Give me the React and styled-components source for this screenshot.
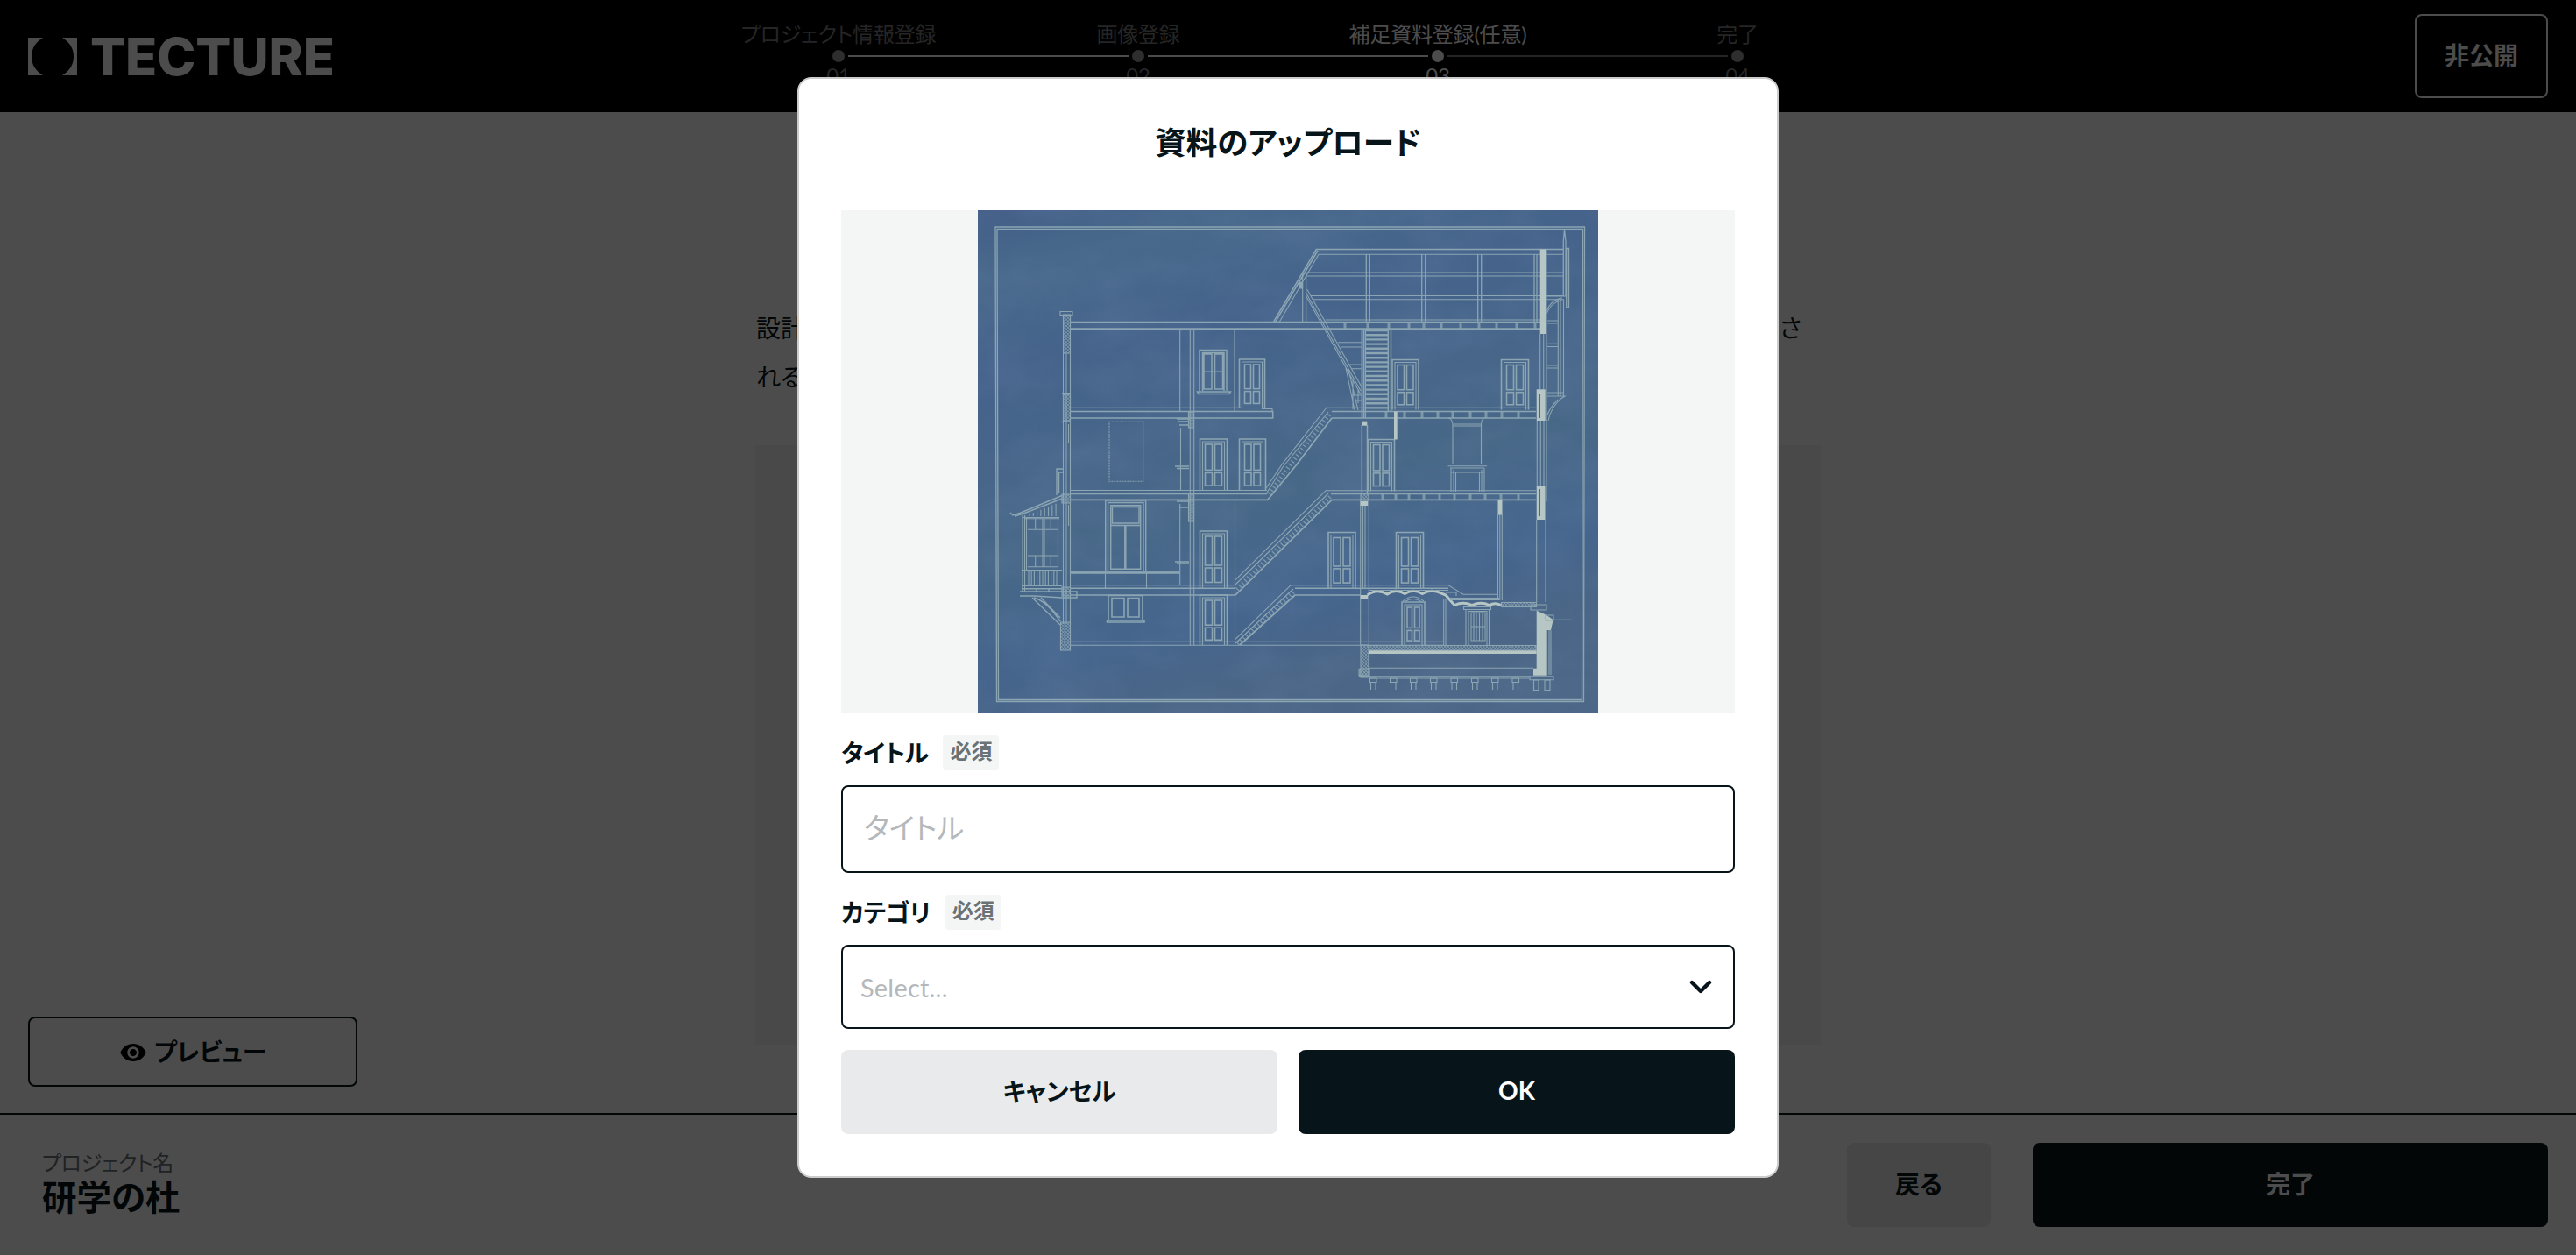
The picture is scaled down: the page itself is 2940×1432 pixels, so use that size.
import React from "react"
import styled, { createGlobalStyle } from "styled-components"
import { MdVisibility } from "react-icons/md"

const ink = "#07151a"

const GlobalStyle = createGlobalStyle`
  * {
    box-sizing: border-box;
  }
  body {
    margin: 0;
    background: #fff;
    color: ${ink};
    font-family: Lato, "Noto Sans CJK JP", sans-serif;
    font-size: 28px;
    font-feature-settings: "palt";
    overflow: hidden;
  }
  button, input {
    font: inherit;
    font-feature-settings: inherit;
  }
`

const Page = styled.div`
  display: flex;
  flex-direction: column;
  height: 1432px;
`

const Header = styled.header`
  display: grid;
  grid-template-columns: 1fr 1368px 1fr;
  align-items: center;
  height: 128px;
  padding: 0 32px;
  background: #000;
  color: #fff;
`

const LogoSvg = styled.svg`
  display: block;
  width: 372px;
  height: 88px;
  fill: #fff;
`

const Steps = styled.ol`
  display: grid;
  grid-template-columns: repeat(4, 342px);
  align-self: start;
  margin: 0;
  padding: 24px 0 0;
  list-style: none;
`

const Step = styled.li`
  display: flex;
  flex-direction: column;
  align-items: center;
  font-size: 24px;
  line-height: 30px;
  letter-spacing: -0.2px;
  white-space: nowrap;
  color: ${p => (p.$active ? "#fff" : "#7c7c7c")};
`

const StepTrack = styled.div`
  display: grid;
  grid-template-columns: 1fr 14px 1fr;
  align-items: center;
  column-gap: 4px;
  width: 100%;
  height: 14px;
  margin-top: 3px;
`

const StepLine = styled.span`
  height: 2px;
  background: ${p => (p.$hidden ? "transparent" : p.$done ? "#fff" : "#7c7c7c")};
`

const StepDot = styled.span`
  height: 14px;
  border-radius: 50%;
  background: ${p => (p.$active ? "#fff" : "#999")};
`

const StatusButton = styled.button`
  justify-self: end;
  width: 152px;
  height: 96px;
  padding: 0 0 4px;
  border: 2px solid #fff;
  border-radius: 8px;
  background: none;
  color: #fff;
  font-weight: 700;
`

const Main = styled.main`
  flex: 1;
  width: 1216px;
  margin: 0 auto;
  padding-top: 218px;
`

const Lead = styled.p`
  display: flex;
  justify-content: space-between;
  margin: 0;
  padding: 0 22px 0 1px;
  line-height: 56px;
`

const DropArea = styled.div`
  height: 684px;
  margin-top: 50px;
  background: #f4f6f5;
`

const PreviewRow = styled.div`
  height: 0;
  padding-left: 32px;
`

const PreviewButton = styled.button`
  display: flex;
  justify-content: center;
  align-items: center;
  gap: 8px;
  width: 376px;
  height: 80px;
  margin-top: -110px;
  padding: 0 0 2px;
  border: 2px solid ${ink};
  border-radius: 8px;
  background: none;
  color: ${ink};
  font-weight: 700;
  svg {
    width: 32px;
    height: 32px;
    margin-top: 4px;
    fill: #000;
  }
`

const Footer = styled.footer`
  display: flex;
  align-items: center;
  height: 162px;
  padding: 0 32px 0 48px;
  border-top: 2px solid ${ink};
`

const ProjectInfo = styled.div`
  flex: 1;
`

const ProjectLabel = styled.div`
  font-size: 24px;
  line-height: 28px;
  letter-spacing: -0.4px;
  color: #6b7276;
`

const ProjectName = styled.div`
  font-size: 39.5px;
  font-weight: 700;
  line-height: 50px;
`

const Button = styled.button`
  width: ${p => p.$width}px;
  height: 96px;
  margin-left: ${p => p.$gap || 0}px;
  padding: 0 0 4px;
  border: 0;
  border-radius: 8px;
  background: ${p => (p.$primary ? ink : "#e9eaec")};
  color: ${p => (p.$primary ? "#fff" : ink)};
  font-weight: 700;
`

const Overlay = styled.div`
  position: fixed;
  inset: 0;
  display: flex;
  align-items: center;
  justify-content: center;
  background: rgba(0, 0, 0, 0.7);
`

const Modal = styled.section`
  width: 1120px;
  height: 1256px;
  padding: 0 48px;
  border: 2px solid #ccc;
  border-radius: 16px;
  background: #fff;
`

const ModalTitle = styled.h2`
  margin: 0;
  height: 150px;
  font-size: 35.5px;
  line-height: 145px;
  text-align: center;
`

const PreviewFrame = styled.div`
  display: flex;
  justify-content: center;
  height: 574px;
  background: #f4f6f5;
`

const FieldHead = styled.div`
  display: flex;
  align-items: center;
  gap: 17px;
  height: 82px;
  padding-top: 8px;
  font-weight: 700;
  line-height: 40px;
  letter-spacing: -0.5px;
`

const Required = styled.span`
  width: 64px;
  height: 40px;
  border-radius: 4px;
  background: #f4f6f5;
  color: #6b7276;
  font-size: 24px;
  line-height: 36px;
  letter-spacing: 0;
  text-align: center;
`

const TextInput = styled.input`
  display: block;
  width: 100%;
  height: 100px;
  padding: 0 24px 4px;
  border: 2px solid ${ink};
  border-radius: 8px;
  background: #fff;
  font-size: 33px;
  outline: none;
  &::placeholder {
    color: #b5b8ba;
    opacity: 1;
  }
`

const SelectBox = styled.div`
  display: flex;
  align-items: center;
  justify-content: space-between;
  height: 96px;
  margin-bottom: 24px;
  padding: 0 24px 0 20px;
  border: 2px solid ${ink};
  border-radius: 8px;
  color: #b5b8ba;
  font-size: 29px;
  letter-spacing: 0.2px;
`

const Chevron = styled.svg`
  width: 26px;
  height: 16px;
  fill: none;
  stroke: ${ink};
  stroke-width: 4.4;
  stroke-linecap: round;
  stroke-linejoin: round;
`

const Actions = styled.div`
  display: flex;
`

const steps = [
  { label: "プロジェクト情報登録", no: "01" },
  { label: "画像登録", no: "02" },
  { label: "補足資料登録(任意)", no: "03" },
  { label: "完了", no: "04" },
]
const current = 2

const Logo = () => (
  <LogoSvg viewBox="0 -20 372 88">
    <path d="M0 3H17Q4 11 4 24.500Q4 38 17 46H0Z" />
    <path d="M56 3H39Q52 11 52 24.500Q52 38 39 46H56Z" />
    <text
      x="71"
      y="46"
      fontFamily="Inter"
      fontWeight="800"
      fontSize="59"
      textLength="279"
      lengthAdjust="spacingAndGlyphs"
    >
      TECTURE
    </text>
  </LogoSvg>
)

const Sheet = styled.svg`
  display: block;
  width: 708px;
  height: 574px;
  fill: none;
  stroke: #8ba5b2;
  stroke-width: 1.1;
`

const doors = [
  [1414.5, 410, 29, 56],
  [1369.5, 501, 31, 59],
  [1414.5, 501, 30, 59],
  [1561.5, 501.5, 30, 59],
  [1589, 410.5, 30, 57],
  [1713.5, 410.5, 31, 57],
  [1369.5, 606, 31, 65],
  [1369.5, 679, 31, 57],
  [1516, 607.5, 31, 64],
  [1593.5, 607.5, 31, 64],
  [1600, 687, 26, 49],
]

const Door = ({ x, y, w, h }) => {
  const pw = (w - 15) / 2
  const top = (h - 10) * 0.6
  const low = (h - 10) * 0.3
  return (
    <g>
      <path d={`M${x} ${y + h}V${y}H${x + w}V${y + h}`} strokeWidth="1.6" />
      <path d={`M${x + 3} ${y + h}V${y + 3}H${x + w - 3}V${y + h}`} />
      <rect x={x + 6} y={y + 6} width={pw} height={top} strokeWidth="1.6" />
      <rect x={x + w - 6 - pw} y={y + 6} width={pw} height={top} strokeWidth="1.6" />
      <rect x={x + 6} y={y + top + 9} width={pw} height={low} strokeWidth="1.6" />
      <rect x={x + w - 6 - pw} y={y + top + 9} width={pw} height={low} strokeWidth="1.6" />
    </g>
  )
}

const range = (from, to, step) => {
  const out = []
  for (let n = from; n <= to; n += step) out.push(n)
  return out
}

const Ticks = ({ xs, y, h }) => (
  <path d={xs.map(x => `M${x} ${y}v${h}`).join("")} strokeWidth="3" opacity="0.8" />
)

const Blueprint = () => (
  <Sheet viewBox="1116 240 708 574">
    <defs>
      <linearGradient id="paper" x1="0" y1="0" x2="0.3" y2="1">
        <stop offset="0" stopColor="#425d87" />
        <stop offset="0.12" stopColor="#48698b" />
        <stop offset="0.3" stopColor="#45638b" />
        <stop offset="0.65" stopColor="#486888" />
        <stop offset="0.85" stopColor="#45658d" />
        <stop offset="1" stopColor="#4b6686" />
      </linearGradient>
      <pattern id="hatch" width="2.600" height="2.600" patternUnits="userSpaceOnUse" patternTransform="rotate(45)">
        <path d="M0 0H2.600M0 0V2.600" stroke="#8ba5b2" strokeWidth="1.100" />
      </pattern>
      <filter id="grain" x="0" y="0" width="1" height="1">
        <feTurbulence type="fractalNoise" baseFrequency="0.012 0.02" numOctaves="4" seed="4" />
        <feColorMatrix values="0 0 0 0 0.22  0 0 0 0 0.3  0 0 0 0 0.5  0.9 0 0 0 -0.3" />
      </filter>
    </defs>
    <rect x="1116" y="240" width="708" height="574" fill="url(#paper)" stroke="none" />
    <rect x="1116" y="240" width="708" height="574" filter="url(#grain)" opacity="0.3" stroke="none" />

    {/* sheet border */}
    <path d="M1136 259H1808.500L1807.500 800.500H1137.500ZM1138 261.500H1806.500L1805.500 798.500H1139.500Z" strokeWidth="1.300" />

    {/* left wall */}
    <g fill="url(#hatch)">
      <rect x="1213.5" y="359" width="8" height="44" />
      <rect x="1213.5" y="450" width="8" height="30" />
      <rect x="1212" y="564" width="9.5" height="10" />
      <rect x="1212" y="670" width="9.5" height="10" />
      <rect x="1210.5" y="710" width="11" height="32" />
      <rect x="1553" y="736" width="9.500" height="37" />
      <rect x="1562" y="736.500" width="191" height="5.500" />
      <rect x="1713.500" y="687.500" width="40" height="5" />
      <rect x="1356.500" y="470" width="6" height="18" />
      <rect x="1356.500" y="563" width="6" height="32" />
      <rect x="1553" y="563" width="9" height="8" />
      <rect x="1552" y="763" width="11" height="8" />
    </g>
    <path d="M1210 355.500h14v4h-14zM1213.500 403V712M1217 403V712M1221.500 403V712M1212 448.500h10M1212 481h10M1219.500 484v22M1219.500 576v24" />

    {/* roof and floors */}
    <path d="M1221 367.700H1758M1221 375.200H1758" strokeWidth="1.700" />
    <path d="M1221 469.500H1452.700V477H1221M1520 469.500H1753M1520 477H1753" strokeWidth="1.600" />
    <path d="M1221 563.300H1446M1221 570.300H1447M1519 563.300H1753M1520 570.300H1753" strokeWidth="1.700" />
    <path d="M1221 671.300H1410M1221 679H1410M1478 671.300H1653M1478 679H1553" strokeWidth="1.500" />
    <path d="M1221 465.300H1418M1440 466.500H1452V469M1513 465.300H1753M1221 559.500H1446M1513 559.700H1753M1221 667.700H1410M1473 667.700H1653L1670 678.300H1709" />
    <path d="M1221 732.300H1647M1221 736.300H1647" />

    {/* inner walls */}
    <path d="M1346.700 375V469M1347.500 488V560M1346.700 575V667M1358.300 375V736M1360.500 375V736M1362.700 375V736M1409 375V469M1409.500 571V732" />
    <path d="M1343 478h15M1344 481h13M1346 485h11M1341 532h16M1343 534.500h14M1343 572h15M1346 579h11M1341 641h16M1343 643h14" strokeWidth="1.500" />
    <rect x="1266" y="481.300" width="38.700" height="68" strokeDasharray="2 1" />

    {doors.map(([x, y, w, h]) => (
      <Door key={`${x}-${y}`} x={x} y={y} w={w} h={h} />
    ))}

    {/* windows */}
    <path d="M1369 446V399.500H1400V446M1372.500 446V402.500H1397V446M1374 404H1383V444H1374ZM1386.500 404H1395.500V444H1386.500ZM1374 424.300H1395M1366.500 447H1404.500L1403 449.500H1368Z" strokeWidth="1.500" />
    <path d="M1261.700 652V571H1307.700V652M1264.500 652V573.500H1305V652M1267.700 576.700H1301.700V649.300H1267.700ZM1269.500 578.500H1300V597H1269.500ZM1267.700 599.500H1301.700" strokeWidth="1.400" />
    <path d="M1284.300 600V649M1221 653.500H1346.700" strokeWidth="2.500" />
    <path d="M1221 652H1346M1261.500 654V671M1308.500 654V671" />
    <path d="M1265 708V679.500H1304V708M1269 682.500H1283V704H1269ZM1287 682.500H1300V704H1287ZM1263.500 708H1306V710H1263.500Z" strokeWidth="1.600" />
    <path d="M1601 686Q1612.500 676 1625 686M1603 687Q1612.500 680 1623 687" />
    <path d="M1670.500 692.500h31v3h-31zM1673 695.500V736M1676 697.500H1697V736M1699.500 695.500V736M1676 697.500V736M1679 699H1695V731H1679ZM1679 715H1695" />
    <path d="M1682 699V731M1685 699V731M1688.500 699V731M1692 699V731" />

    {/* bay */}
    <path d="M1153 585L1156 588L1165 585L1212 565.500M1158 589L1168 586L1212 569M1206 565V535H1213M1207.500 539H1213M1208.500 539V563" strokeWidth="1.400" />
    <path d="M1167 586V675M1169.500 588V675M1171.500 591V650M1167 590.500H1209M1169 591.700H1209M1190 592V647M1192 592V647M1207.500 592V647M1173 604.300H1207M1173 634H1207M1173 646.700H1207M1181.700 592V604M1199.300 592V604M1181.700 634V647M1199.300 634V647M1166 650.500H1212M1166 668.500H1212" />
    <path d={range(1174, 1208, 3.2).map(x => `M${x} 652v15`).join("")} />
    <path d={range(1175, 1208, 4.3).map(x => `M${x} ${588 - (x - 1172) * 0.4}V589`).join("")} />
    <path d="M1166 671.700H1212M1164 675H1229V682H1212M1164 680H1180L1212 682M1178 682L1210 713M1188 682L1210 705M1180 682Q1195 686 1210 709M1183 671v4M1197 671v4" strokeWidth="1.400" />

    {/* stairs */}
    <g>
      <path d="M1513.300 466L1463 530L1445 557M1520 477L1480 530L1447 570M1516 470L1464 533L1446 562" />
      <path d="M1513.300 559.700L1410 661.700M1516 563L1410 667M1520 570.300L1410 679" />
      <path d="M1473.300 667.700L1410 729.300M1476 672L1410 734M1478 679L1415 736" />
      <g strokeWidth="5" strokeDasharray="1.300 3.200" opacity="0.8">
        <path d="M1517 473L1472 531L1447 566" />
        <path d="M1518 567L1411 673" />
        <path d="M1476 675.500L1412 735" />
      </g>
      <path d="M1520 477L1480 530L1447 570M1520 570.300L1410 679M1478 679L1415 736" strokeWidth="1.700" />
    </g>

    {/* attic */}
    <path d="M1453.300 367.700L1502.300 284.500H1785M1455.500 367.700L1504 286" strokeWidth="1.500" />
    <path d="M1460 367.700L1505 290.300H1785M1491.700 311H1785M1490 315H1785M1496 337.500H1785M1498 341.700H1785M1512.700 365H1758M1486.700 312V368M1490.700 312V368" />
    <path d="M1559.300 290V368M1563.300 290V368M1622.700 290V368M1626.700 290V368M1686.700 290V368M1690.700 290V368M1751 290V368M1754 290V368" strokeWidth="1.300" />
    <path d="M1491.700 330L1555 443.300M1490.700 338L1553 450M1490 333L1553 446M1536 420L1546 468M1539 422L1550 468M1544 432V467M1550 444V460M1527 390.700H1555M1530 396H1555M1540 416H1555M1543 420.700H1555M1543 451H1555M1546 457H1555" />
    <rect x="1483.500" y="322" width="3" height="7" fill="#8ba5b2" />

    {/* ladder stair */}
    <path d="M1554.300 375V477M1556.300 375V477M1558.300 375V477M1584.300 375V469M1587.500 375V469M1554.300 485V563M1560.500 485V563" strokeWidth="1.500" />
    <path d={range(377, 466, 5.2).map(y => `M1558 ${y}h27`).join("")} strokeWidth="2.400" />
    <path d="M1552.700 571V736M1555.500 577V671M1558 577V671M1562.300 571V736" />

    <Ticks xs={[1535, 1561, 1585, 1608, 1625, 1645, 1667, 1688, 1708, 1731, 1752]} y={368} h={7} />
    <Ticks xs={[1582, 1603, 1623, 1641, 1658, 1678, 1696, 1714, 1733]} y={470} h={7} />
    <Ticks xs={[1578, 1593, 1608, 1625, 1643, 1660, 1678, 1695, 1713, 1733]} y={563} h={7} />

    {/* fireplace */}
    <path d="M1653 477Q1658 478 1658 486V530M1694 477Q1690.500 478 1690.500 486V530M1658 484H1691M1658 486H1691M1652.500 531.700H1697M1655 534H1694M1656 534V561M1661.500 539V561M1688.500 539V561M1694 534V561M1659 536V561M1691 536V561M1656 539H1694" />

    {/* right wall */}
    <path d="M1757.700 381V444M1761.700 381V444M1765 284V450M1754.300 480V554M1758.300 480V554M1765 450V572M1762 480V554M1753.700 593V687M1764 593V687M1709.500 587V685M1711.800 587V685M1714.300 587V685M1647.700 684V736M1650 684V736" />
    <path d="M1784.300 338V275L1785.500 262L1787 275V338M1787.700 283.500V351H1790.500V283.500Z" strokeWidth="1.300" />
    <path d="M1778.300 342V452M1781 342V452M1784.500 342V452M1765 338H1788M1765 355Q1770 342 1783 340M1765 358Q1771 344 1783 343M1766 366H1778M1766 369H1778M1766 392.300H1778M1766 395.500H1778M1766 417H1778M1766 420H1778M1766 448H1784M1766 452H1786L1780 456Q1769 468 1767 480M1778 456Q1768 466 1766 474" />

    {/* cut masonry */}
    <g fill="#b5c6c4" stroke="none">
      <rect x="1757.700" y="284.500" width="6.300" height="96.500" />
      <path d="M1753.700 444.300H1763.700V480H1753.700ZM1756 449V477H1758V449Z" fillRule="evenodd" />
      <path d="M1753.700 554H1763.500V593H1753.700ZM1756 558V589H1758V558Z" fillRule="evenodd" />
      <rect x="1591" y="469.500" width="3.700" height="32" />
      <rect x="1554.300" y="480.700" width="6" height="5" />
      <rect x="1552.700" y="572" width="8.500" height="5" />
      <rect x="1552.700" y="679" width="8.500" height="5" />
      <rect x="1709.500" y="570.500" width="5" height="17" />
      <rect x="1561.700" y="742.300" width="192" height="3.700" />
      <path d="M1753.700 696.700L1765 701.700L1772.700 707.300L1770 719H1765.700V770.700H1750V762.700H1753.700Z" />
    </g>
    <path
      d="M1560.700 679Q1571 671 1583.300 678Q1593 671 1603.300 677.500Q1613 671 1623.300 677.500Q1634 671 1646 677.500L1650 679Q1654 684 1660 690.500Q1670 686 1680 690.500Q1690 686 1700 690.500Q1706 687 1713 690.500"
      stroke="#b5c6c4"
      strokeWidth="3"
    />
    <path d="M1562 673.500H1653M1655 682.500H1711M1655 684.500H1711M1650 676H1662V680M1747 690h18v6h-18zM1764 702h9v6h-9zM1768 719V770M1770 719V770M1772.700 707.300H1794" />

    {/* foundation */}
    <path d="M1562 746V771M1562 762.300H1750M1551 771.700H1772M1562 774H1746M1746 771.700h27v4h-27zM1551 763v8h5" />
    <path
      d={[1563.5, 1586.5, 1609.5, 1632.5, 1656, 1679.5, 1702.5, 1726]
        .map(x => `M${x} 774h7.500v4.500h-7.500zM${x + 1} 778.500v8.500M${x + 6.5} 778.500v8.500`)
        .join("")}
    />
    <path d="M1750.500 776h5.500v11.500h-5.500zM1763 776h6v11.500h-6z" />
  </Sheet>
)

export default function App() {
  return (
    <>
      <GlobalStyle />
      <Page>
        <Header>
          <Logo />
          <Steps>
            {steps.map((s, i) => (
              <Step key={s.no} $active={i === current}>
                {s.label}
                <StepTrack>
                  <StepLine $hidden={i === 0} $done={i <= current} />
                  <StepDot $active={i === current} />
                  <StepLine $hidden={i === steps.length - 1} $done={i < current} />
                </StepTrack>
                {s.no}
              </Step>
            ))}
          </Steps>
          <StatusButton>非公開</StatusButton>
        </Header>
        <Main>
          <Lead>
            <span>設計</span>
            <span>さ</span>
          </Lead>
          <Lead>れる</Lead>
          <DropArea />
        </Main>
        <PreviewRow>
          <PreviewButton>
            <MdVisibility />
            プレビュー
          </PreviewButton>
        </PreviewRow>
        <Footer>
          <ProjectInfo>
            <ProjectLabel>プロジェクト名</ProjectLabel>
            <ProjectName>研学の杜</ProjectName>
          </ProjectInfo>
          <Button $width={164}>戻る</Button>
          <Button $width={588} $gap={48} $primary>
            完了
          </Button>
        </Footer>
      </Page>

      <Overlay>
        <Modal>
          <ModalTitle>資料のアップロード</ModalTitle>
          <PreviewFrame>
            <Blueprint />
          </PreviewFrame>
          <FieldHead>
            タイトル
            <Required>必須</Required>
          </FieldHead>
          <TextInput placeholder="タイトル" />
          <FieldHead>
            カテゴリ
            <Required>必須</Required>
          </FieldHead>
          <SelectBox>
            Select...
            <Chevron viewBox="0 0 26 16">
              <path d="M3 3L13 13L23 3" />
            </Chevron>
          </SelectBox>
          <Actions>
            <Button $width={498}>キャンセル</Button>
            <Button $width={498} $gap={24} $primary>
              OK
            </Button>
          </Actions>
        </Modal>
      </Overlay>
    </>
  )
}
